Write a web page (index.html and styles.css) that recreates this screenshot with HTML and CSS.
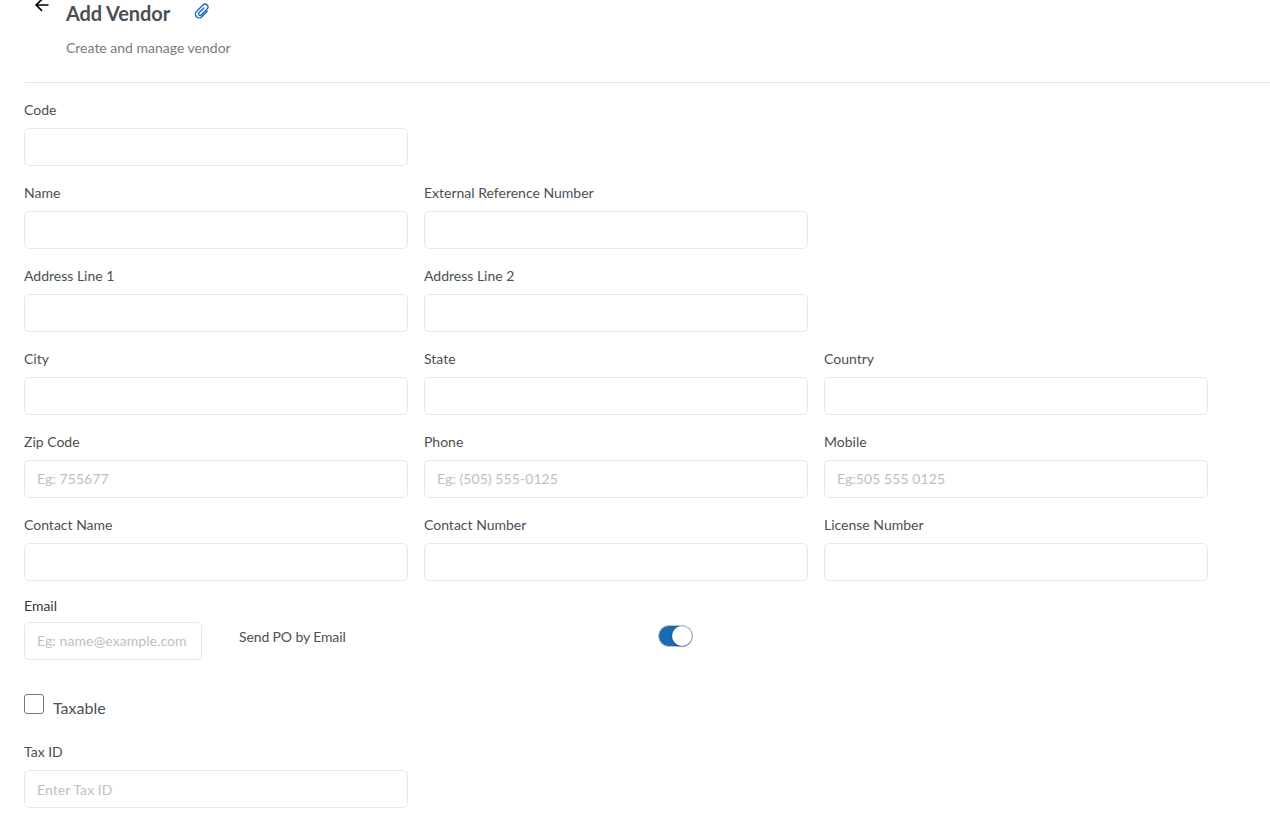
FILE: index.html
```
<!DOCTYPE html>
<html lang="en">
<head>
  <meta charset="UTF-8">
  <meta name="viewport" content="width=device-width, initial-scale=1.0">
  <title>Add Vendor</title>
  <link rel="stylesheet" href="styles.css">
</head>
<body>
  <header class="page-header">
    <a class="back" href="#" aria-label="Back">
      <svg width="16" height="16" viewBox="0 0 16 16" fill="none" stroke="#000" stroke-width="1.7">
        <path d="M14.5 8H2.5M8 2.2L2.2 8L8 13.8"/>
      </svg>
    </a>
    <div class="heading">
      <div class="title-row">
        <h1>Add Vendor</h1>
        <svg class="clip" width="18" height="18" viewBox="0 0 18 18" fill="none" stroke="#1c6ab1" stroke-width="1.4" stroke-linecap="round">
          <path transform="translate(9 9) rotate(45)" d="M4 -3.5V4.2A3.8 3.8 0 0 1 -3.6 4.2V-5A2.9 2.9 0 0 1 2.2 -5V3.4A1.5 1.5 0 0 1 -.9 3.4V-3.5"/>
        </svg>
      </div>
      <p>Create and manage vendor</p>
    </div>
  </header>

  <form id="vendorForm">
    <div class="form-row">
      <div class="form-group">
        <label for="code">Code</label>
        <input type="text" id="code" name="code">
      </div>
    </div>
    <div class="form-row">
      <div class="form-group">
        <label for="name">Name</label>
        <input type="text" id="name" name="name">
      </div>
      <div class="form-group">
        <label for="reference">External Reference Number</label>
        <input type="text" id="reference" name="reference">
      </div>
    </div>
    <div class="form-row">
      <div class="form-group">
        <label for="address1">Address Line 1</label>
        <input type="text" id="address1" name="address1">
      </div>
      <div class="form-group">
        <label for="address2">Address Line 2</label>
        <input type="text" id="address2" name="address2">
      </div>
    </div>
    <div class="form-row">
      <div class="form-group">
        <label for="city">City</label>
        <input type="text" id="city" name="city">
      </div>
      <div class="form-group">
        <label for="state">State</label>
        <input type="text" id="state" name="state">
      </div>
      <div class="form-group">
        <label for="country">Country</label>
        <input type="text" id="country" name="country">
      </div>
    </div>
    <div class="form-row">
      <div class="form-group">
        <label for="zip">Zip Code</label>
        <input type="text" id="zip" name="zip" placeholder="Eg: 755677">
      </div>
      <div class="form-group">
        <label for="phone">Phone</label>
        <input type="text" id="phone" name="phone" placeholder="Eg: (505) 555-0125">
      </div>
      <div class="form-group">
        <label for="mobile">Mobile</label>
        <input type="text" id="mobile" name="mobile" placeholder="Eg:505 555 0125">
      </div>
    </div>
    <div class="form-row">
      <div class="form-group">
        <label for="contactName">Contact Name</label>
        <input type="text" id="contactName" name="contactName">
      </div>
      <div class="form-group">
        <label for="contactNumber">Contact Number</label>
        <input type="text" id="contactNumber" name="contactNumber">
      </div>
      <div class="form-group">
        <label for="license">License Number</label>
        <input type="text" id="license" name="license">
      </div>
    </div>

    <div class="email-row">
      <div class="form-group email">
        <label for="email">Email</label>
        <input type="text" id="email" name="email" placeholder="Eg: name@example.com">
      </div>
      <label class="send-po" for="sendPo">Send PO by Email</label>
      <input type="checkbox" class="switch" id="sendPo" name="sendPo" checked>
    </div>

    <div class="taxable">
      <input type="checkbox" class="checkbox" id="taxable" name="taxable">
      <label for="taxable">Taxable</label>
    </div>

    <div class="form-row">
      <div class="form-group tax-id">
        <label for="taxId">Tax ID</label>
        <input type="text" id="taxId" name="taxId" placeholder="Enter Tax ID">
      </div>
    </div>
  </form>
</body>
</html>
```

FILE: styles.css
```
* {
  box-sizing: border-box;
}
body {
  font-family: Lato, "Liberation Sans", sans-serif;
  font-size: 14px;
  color: #495057;
  margin: 0;
  background-color: #fff;
  height: 818px;
  overflow: hidden;
}
.page-header {
  display: flex;
  height: 83px;
  margin-left: 25px;
  padding-left: 9px;
  border-bottom: 1px solid #e4e4e4;
}
.back {
  width: 32px;
  height: 16px;
  margin-top: -3px;
}
.back svg,
.clip {
  display: block;
}
.title-row {
  display: flex;
  height: 28px;
}
.title-row h1 {
  margin: 0;
  font-size: 20px;
  line-height: 27px;
  font-weight: 700;
  letter-spacing: -0.1px;
}
.clip {
  margin: 2px 0 0 23px;
}
.heading p {
  margin: 10px 0 0;
  line-height: 20px;
  color: #7b7b7b;
}
#vendorForm {
  padding: 17px 0 0 24px;
}
.form-row {
  display: flex;
  gap: 16px;
  margin-bottom: 17px;
}
.form-group {
  width: 384px;
}
.form-group label {
  display: block;
  line-height: 20px;
  margin-bottom: 8px;
}
.form-group input {
  display: block;
  width: 100%;
  height: 38px;
  padding: 0 12px 2px;
  border: 1px solid #e8e8e8;
  border-radius: 5px;
  background-color: #fff;
  font-family: inherit;
  font-size: 14px;
  letter-spacing: 0.07px;
  color: #495057;
}
.form-group input::placeholder {
  color: #c0c0c0;
}
.tax-id input {
  padding-bottom: 0;
}
.email-row {
  display: flex;
  align-items: flex-start;
}
.email {
  width: 178px;
}
.email label {
  line-height: 16px;
  color: #32373c;
}
.send-po {
  width: 419px;
  margin: 29px 0 0 37px;
  line-height: 20px;
  letter-spacing: -0.12px;
}
.switch {
  appearance: none;
  display: flex;
  justify-content: flex-end;
  width: 35px;
  height: 22px;
  margin: 27px 0 0;
  border-radius: 11px;
  background-color: #1c6ab1;
  border: 1px solid #b9c3cd;
}
.switch::before {
  content: "";
  width: 20px;
  height: 20px;
  border-radius: 50%;
  background-color: #fff;
  box-shadow: 0 1px 2px rgba(0, 0, 0, 0.3);
}
.taxable {
  display: flex;
  margin: 34px 0 28px;
  font-size: 16px;
}
.checkbox {
  appearance: none;
  width: 20px;
  height: 20px;
  margin: 0 9px 0 0;
  border: 1px solid #767676;
  border-radius: 3px;
}
.taxable label {
  line-height: 20px;
  margin-top: 4px;
  margin-bottom: -4px;
}
```
